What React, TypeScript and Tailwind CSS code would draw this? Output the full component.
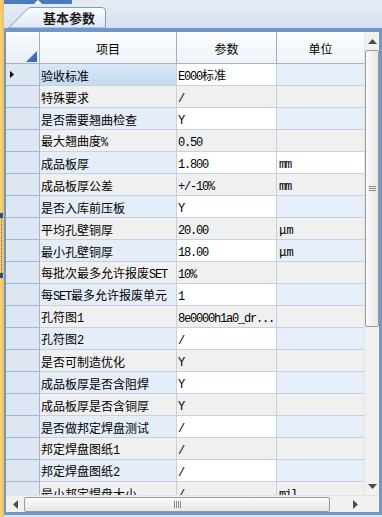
import React from "react";

const rows: [string, string, string][] = [
  ["验收标准", "E000标准", ""],
  ["特殊要求", "/", ""],
  ["是否需要翘曲检查", "Y", ""],
  ["最大翘曲度%", "0.50", ""],
  ["成品板厚", "1.800", "mm"],
  ["成品板厚公差", "+/-10%", "mm"],
  ["是否入库前压板", "Y", ""],
  ["平均孔壁铜厚", "20.00", "μm"],
  ["最小孔壁铜厚", "18.00", "μm"],
  ["每批次最多允许报废SET", "10%", ""],
  ["每SET最多允许报废单元", "1", ""],
  ["孔符图1", "8e0000h1a0_dr...", ""],
  ["孔符图2", "/", ""],
  ["是否可制造优化", "Y", ""],
  ["成品板厚是否含阻焊", "Y", ""],
  ["成品板厚是否含铜厚", "Y", ""],
  ["是否做邦定焊盘测试", "/", ""],
  ["邦定焊盘图纸1", "/", ""],
  ["邦定焊盘图纸2", "/", ""],
  ["最小邦定焊盘大小", "/", "mil"],
];

function T({ s }: { s: string }) {
  const parts = s.split(/([\x20-\x7e]+)/).filter((p) => p.length > 0);
  return (
    <span className="whitespace-pre text-black">
      {parts.map((p, i) =>
        /^[\x20-\x7e]+$/.test(p) ? (
          <span key={i} className="font-['Liberation_Mono',monospace] text-[12px] tracking-[-1.2px] text-black">
            {p}
          </span>
        ) : (
          <span key={i} className="font-['Noto_Sans_CJK_SC',sans-serif] text-[12px] text-black">
            {p}
          </span>
        )
      )}
    </span>
  );
}

export default function App() {
  return (
    <div className="w-[382px] h-[517px] flex overflow-hidden bg-[#d9e5f3] text-black leading-none">
      {/* left splitter strip */}
      <div className="w-[4px] h-full flex flex-col bg-gradient-to-r from-[#f7d37f] to-[#f0c05a]">
        <div className="h-[213px]" />
        <div className="h-[5px] w-[3px] bg-[#2d4f86]" />
        <div className="h-[55px] w-[1px] ml-[1px] border-l border-dotted border-[#5c6f8c]" />
        <div className="h-[5px] w-[3px] bg-[#2d4f86]" />
      </div>

      <div className="flex-1 flex flex-col min-h-0">
        {/* top band */}
        <div className="h-[4px] flex shrink-0">
          <div className="w-[68px] h-full bg-[#4a7bc0] flex justify-center">
            <svg width="10" height="4" viewBox="0 0 10 4">
              <polygon points="1,4 5,0 9,4" fill="#ffffff" />
            </svg>
          </div>
          <div className="flex-1 bg-[#e6ebf2]" />
        </div>

        {/* tab strip */}
        <div className="h-[24px] shrink-0 flex items-end bg-gradient-to-b from-[#e3ecf7] to-[#d4e2f2] pl-[4px]">
          <div className="relative w-[98px] h-[21px] flex items-center justify-end pr-[11px]">
            <svg className="absolute inset-0" width="98" height="21" viewBox="0 0 98 21">
              <defs>
                <linearGradient id="tabg" x1="0" y1="0" x2="0" y2="1">
                  <stop offset="0" stopColor="#fdfeff" />
                  <stop offset="1" stopColor="#dbe7f6" />
                </linearGradient>
              </defs>
              <path d="M0.5 21 L20 1.5 Q21 0.5 23 0.5 L94 0.5 Q97.5 0.5 97.5 4 L97.5 21 Z" fill="url(#tabg)" stroke="#7f9cc6" />
            </svg>
            <span className="relative font-['Noto_Sans_CJK_SC',sans-serif] text-[13px] font-bold text-[#1b1b1b]">基本参数</span>
          </div>
          <div className="flex-1" />
        </div>

        {/* grid frame */}
        <div className="flex-1 min-h-0 flex flex-col border-l-2 border-r-[3px] border-t-4 border-b-[3px] border-[#7196c8] mb-[2px] bg-white">
          <div className="flex flex-1 min-h-0">
            <div className="w-[358px] flex flex-col min-h-0">
              {/* header */}
              <div className="h-[32px] flex bg-gradient-to-b from-[#fdfdfe] to-[#eef2f7] border-b border-[#a3b3c8] shrink-0">
                <div className="w-[34px] border-r border-[#9db0c9] flex items-end justify-end pr-[2px] pb-[1px] bg-gradient-to-b from-[#f9fbfd] to-[#e9eef5]">
                  <svg width="11" height="11" viewBox="0 0 11 11">
                    <polygon points="0,11 11,11 11,0" fill="#3a6cbc" />
                  </svg>
                </div>
                <div className="w-[137px] border-r border-[#9db0c9] flex items-center justify-center">
                  <T s="项目" />
                </div>
                <div className="w-[100px] border-r border-[#9db0c9] flex items-center justify-center">
                  <T s="参数" />
                </div>
                <div className="w-[87px] flex items-center justify-center">
                  <T s="单位" />
                </div>
              </div>
              {/* body */}
              <div className="flex-1 min-h-0 overflow-hidden flex flex-col">
                {rows.map((r, i) => {
                  const odd = i % 2 === 0;
                  const nameBg = i === 0 ? "bg-gradient-to-b from-[#d9e7f8] to-[#c6daf2]" : odd ? "bg-[#e5edf8]" : "bg-[#f0f0f0]";
                  const valBg = odd ? "bg-white" : "bg-[#f0f0f0]";
                  const unitBg = i === 4 ? "bg-white" : odd ? "bg-[#e6eef9]" : "bg-[#f0f0f0]";
                  return (
                    <div key={i} className="h-[22px] shrink-0 flex">
                      <div className="w-[34px] bg-[#dee8f4] border-r border-b border-[#a4b7cf] flex items-center pl-[4px]">
                        {i === 0 && (
                          <svg width="4" height="7" viewBox="0 0 4 7">
                            <polygon points="0,0 4,3.5 0,7" fill="#000" />
                          </svg>
                        )}
                      </div>
                      <div className={`w-[137px] ${nameBg} border-r border-b border-[#c4d1e3] flex items-center pl-[1px] overflow-hidden`}>
                        <T s={r[0]} />
                      </div>
                      <div className={`w-[100px] ${valBg} border-r border-b border-[#c4d1e3] flex items-center pl-[1px] overflow-hidden`}>
                        <T s={r[1]} />
                      </div>
                      <div className={`w-[87px] ${unitBg} border-b border-[#c4d1e3] flex items-center pl-[2px] overflow-hidden`}>
                        <T s={r[2]} />
                      </div>
                    </div>
                  );
                })}
              </div>
            </div>
            {/* vertical scrollbar */}
            <div className="w-[15px] flex flex-col items-center bg-[#f1f1f1] border-l border-[#e4e4e4]">
              <div className="h-[18px] shrink-0 flex items-center justify-center">
                <svg width="9" height="5" viewBox="0 0 9 5">
                  <polygon points="0,5 4.5,0 9,5" fill="#4d4d4d" />
                </svg>
              </div>
              <div className="w-[14px] h-[277px] shrink-0 rounded-[2px] border border-[#9a9a9a] bg-gradient-to-r from-[#fbfbfb] to-[#e6e6e6] flex items-center justify-center">
                <div className="flex flex-col gap-[1px]">
                  <div className="w-[7px] h-[1px] bg-[#8a8a8a]" />
                  <div className="w-[7px] h-[1px] bg-[#8a8a8a]" />
                  <div className="w-[7px] h-[1px] bg-[#8a8a8a]" />
                </div>
              </div>
              <div className="flex-1" />
              <div className="h-[18px] shrink-0 flex items-center justify-center">
                <svg width="9" height="5" viewBox="0 0 9 5">
                  <polygon points="0,0 9,0 4.5,5" fill="#4d4d4d" />
                </svg>
              </div>
            </div>
          </div>
          {/* horizontal scrollbar */}
          <div className="h-[17px] flex shrink-0 bg-[#f1f1f1] border-t border-[#e4e4e4]">
            <div className="w-[18px] flex items-center justify-center">
              <svg width="5" height="9" viewBox="0 0 5 9">
                <polygon points="5,0 0,4.5 5,9" fill="#4d4d4d" />
              </svg>
            </div>
            <div className="w-[306px] h-[15px] my-auto rounded-[2px] border border-[#9a9a9a] bg-gradient-to-b from-[#fbfbfb] to-[#e6e6e6] flex items-center justify-center">
              <div className="flex gap-[1px]">
                <div className="w-[1px] h-[7px] bg-[#8a8a8a]" />
                <div className="w-[1px] h-[7px] bg-[#8a8a8a]" />
                <div className="w-[1px] h-[7px] bg-[#8a8a8a]" />
                <div className="w-[1px] h-[7px] bg-[#8a8a8a]" />
              </div>
            </div>
            <div className="flex-1 flex items-center justify-end pr-[6px]">
              <svg width="5" height="9" viewBox="0 0 5 9">
                <polygon points="0,0 5,4.5 0,9" fill="#4d4d4d" />
              </svg>
            </div>
            <div className="w-[15px] bg-[#f1f1f1]" />
          </div>
        </div>
      </div>
    </div>
  );
}
